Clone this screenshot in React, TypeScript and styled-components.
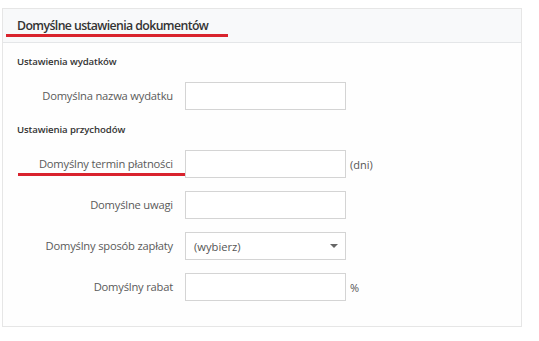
import styled, { createGlobalStyle } from "styled-components";

const GlobalStyle = createGlobalStyle`
    html, body {
        margin: 0;
        padding: 0;
        background: #ffffff;
        font-family: "Open Sans", "Liberation Sans", sans-serif;
    }
`;

interface FieldProps {
    label: string;
    suffix?: string;
    select?: boolean;
    marked?: boolean;
};

function Field({ label, suffix, select, marked }: FieldProps) {
    return <Row>
        <Label>
            {label}
            {marked && <Mark $left={15} $width={167} $top={17} />}
        </Label>
        {select
            ? <SelectBox>
                <span>(wybierz)</span>
                <Caret />
            </SelectBox>
            : <Input />}
        <Suffix>{suffix}</Suffix>
    </Row>
};

export default function App() {
    return <>
        <GlobalStyle />
        <Panel>
            <Header>
                <Title>Domyślne ustawienia dokumentów</Title>
                <Mark $left={3} $width={222} $top={25} />
            </Header>
            <Body>
                <Section>Ustawienia wydatków</Section>
                <Field label="Domyślna nazwa wydatku" />
                <Section>Ustawienia przychodów</Section>
                <Field label="Domyślny termin płatności" suffix="(dni)" marked />
                <Field label="Domyślne uwagi" />
                <Field label="Domyślny sposób zapłaty" select />
                <Field label="Domyślny rabat" suffix="%" />
            </Body>
        </Panel>
    </>
};

const Panel = styled.section`
    margin: 8px 0 0 2px;
    width: 520px;
    height: 319px;
    border: 1px solid #e6e6e6;
    background: #fefefe;
    box-sizing: border-box;
    display: flex;
    flex-direction: column;
`;

const Header = styled.header`
    position: relative;
    height: 34px;
    background: #f8f9fa;
    border-bottom: 1px solid #e4e6e8;
    box-sizing: border-box;
    display: flex;
    align-items: center;
    padding: 0 14px;
`;

const Title = styled.h1`
    margin: 0 0 1px;
    font-size: 12.3px;
    font-weight: 600;
    letter-spacing: -0.6px;
    color: #333333;
`;

const Mark = styled.div<{ $left: number; $width: number; $top: number }>`
    position: absolute;
    left: ${p => p.$left}px;
    top: ${p => p.$top}px;
    width: ${p => p.$width}px;
    height: 3px;
    background: #d9232d;
`;

const Body = styled.div`
    display: flex;
    flex-direction: column;
    padding: 12px 0 0;
`;

const Section = styled.h3`
    margin: 0 0 13px 14px;
    font-size: 9.6px;
    line-height: 14px;
    font-weight: 600;
    letter-spacing: -0.1px;
    color: #333333;
`;

const Row = styled.div`
    display: grid;
    grid-template-columns: 170px 161px auto;
    column-gap: 12px;
    align-items: center;
    margin-bottom: 13px;
`;

const Label = styled.label`
    position: relative;
    text-align: right;
    font-size: 11.2px;
    letter-spacing: -0.2px;
    color: #5a5a5a;
    line-height: 16px;
`;

const Input = styled.div`
    height: 28px;
    border: 1px solid #d4d4d4;
    background: #ffffff;
    box-sizing: border-box;
`;

const SelectBox = styled(Input)`
    display: flex;
    align-items: center;
    justify-content: space-between;
    padding: 0 7px 0 8px;
    font-size: 11.2px;
    color: #555555;
`;

const Caret = styled.span`
    width: 0;
    height: 0;
    border-left: 4px solid transparent;
    border-right: 4px solid transparent;
    border-top: 4px solid #666666;
`;

const Suffix = styled.span`
    margin-left: -8px;
    font-size: 11px;
    color: #555555;
`;
